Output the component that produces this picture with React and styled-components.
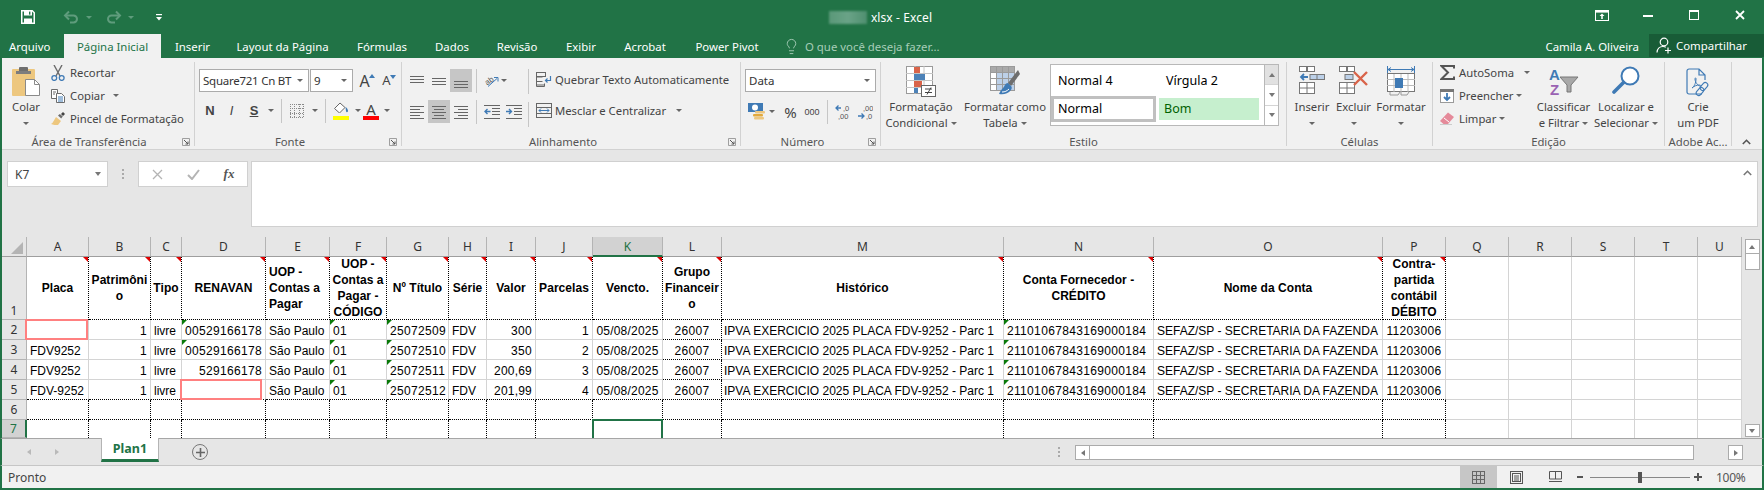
import React from 'react';
import styled, { createGlobalStyle } from 'styled-components';
import { Lightbulb } from 'lucide-react';

const UI = `"Noto Sans", "Open Sans", sans-serif`;
const GREEN = '#217346';

const Global = createGlobalStyle`
  html, body { margin: 0; padding: 0; background: #e6e6e6; }
  * { box-sizing: border-box; }
`;

const Page = styled.div`
  width: 1764px; height: 490px; overflow: hidden; display: flex; flex-direction: column;
  font-family: ${UI}; font-size: 11.3px; color: #444; background: #e6e6e6;
`;

/* ---------- title bar ---------- */
const TitleBar = styled.div`
  height: 34px; background: ${GREEN}; display: grid; grid-template-columns: 1fr auto 1fr; align-items: center; color: #fff;
`;
const Qat = styled.div`display: flex; align-items: center; padding-left: 21px;`;
const QatItem = styled.div`display: flex; align-items: center; margin-left: ${p => p.$ml || 0}px;`;
const Title = styled.div`display: flex; align-items: center; gap: 4px; margin-left: -3px; font-size: 12px; letter-spacing: .1px;`;
const Blurred = styled.span`
  width: 38px; height: 13px; background: linear-gradient(90deg, #5a9878, #6aa387 50%, #4f8f6f); filter: blur(.8px);
`;
const WinControls = styled.div`display: flex; align-items: center; justify-content: flex-end; height: 100%;`;
const WinBtn = styled.div`
  width: ${p => p.$w}px; display: flex; justify-content: center; align-items: center; margin-top: -4px;
`;
const Caret = styled.span`
  display: inline-block; flex: none; width: 0; height: 0; border-left: 3px solid transparent; border-right: 3px solid transparent;
  border-top: 3px solid ${p => p.$c || '#666'}; margin-left: ${p => p.$ml || 0}px;
`;

/* ---------- tabs ---------- */
const TabBar = styled.div`
  height: 24px; background: ${GREEN}; display: flex; color: #fff; font-size: 11.4px;
`;
const Tab = styled.div`
  width: ${p => p.$w}px; height: 24px; display: flex; align-items: center; justify-content: ${p => p.$left ? 'flex-start' : 'center'};
  padding-left: ${p => p.$left ? 9 : 0}px; white-space: nowrap;
  background: ${p => p.$active ? '#f1f1f1' : 'transparent'}; color: ${p => p.$active ? GREEN : '#fff'};
`;
const TellMe = styled.div`display: flex; align-items: center; margin-left: 10px; gap: 5px; color: #a7cdb8;`;
const UserName = styled.div`margin-left: auto; display: flex; align-items: center; padding-right: 10px;`;
const Share = styled.div`
  width: 115px; height: 23px; background: #185c37; display: flex; align-items: center; gap: 4px; padding-left: 7px;
`;

/* ---------- ribbon ---------- */
const Ribbon = styled.div`
  height: 92px; background: #f1f1f1; display: flex; border-left: 2px solid ${GREEN}; border-right: 2px solid ${GREEN};
  box-shadow: inset 0 -1px 0 #d2d2d2;
`;
const Group = styled.div`
  width: ${p => p.$w}px; height: 92px; padding-top: 4px; display: flex; flex-direction: column; flex: none;
`;
const GroupBody = styled.div`
  height: 72px; display: flex; padding-left: ${p => p.$pl || 0}px; gap: ${p => p.$gap || 0}px;
`;
const GroupFoot = styled.div`
  height: 16px; display: flex; align-items: center; justify-content: center; position: relative; color: #555; white-space: nowrap;
  padding-right: ${p => p.$pr || 0}px; padding-bottom: 2px;
`;
const Launch = styled.span`position: absolute; right: 4px; top: 4px; display: flex;`;
const GroupSep = styled.div`width: 1px; height: 84px; margin-top: 4px; background: #d2d2d2; flex: none;`;
const Collapse = styled.div`flex: 1; display: flex; justify-content: center; align-items: flex-end; padding-bottom: 5px; padding-right: 2px;`;

const SmallCol = styled.div`
  display: flex; flex-direction: column; width: ${p => p.$w}px; flex: none; margin-left: ${p => p.$ml || 0}px;
  padding-top: ${p => p.$pt || 0}px; gap: ${p => p.$gap || 0}px;
`;
const SmallBtn = styled.div`height: 23px; display: flex; align-items: center; white-space: nowrap; padding-bottom: 2px;`;
const SmallIcon = styled.span`width: ${p => p.$w || 14}px; display: flex; justify-content: center; flex: none; margin-right: ${p => p.$mr ?? 5}px;`;
const LargeBtn = styled.div`
  width: ${p => p.$w}px; flex: none; display: flex; flex-direction: column; align-items: center; white-space: nowrap; line-height: 16px;
`;
const LargeIcon = styled.div`height: 37px; display: flex; align-items: flex-start; justify-content: center; padding-top: ${p => p.$pt ?? 4}px;`;
const TextLine = styled.div`height: 16px; display: flex; align-items: center; justify-content: center;`;

const Stack = styled.div`display: flex; flex-direction: column; padding-top: 7px; gap: ${p => p.$gap ?? 7}px; flex: none; margin-left: ${p => p.$ml || 0}px;`;
const Row = styled.div`display: flex; align-items: center; height: 23px; flex: none; margin-top: ${p => p.$mt || 0}px;`;
const Combo = styled.div`
  width: ${p => p.$w}px; height: 23px; background: #fff; border: 1px solid #ababab; display: flex; align-items: center; white-space: nowrap;
  justify-content: space-between; padding: 0 5px 0 3px; margin-left: ${p => p.$ml || 0}px; color: #333; font-size: 11.5px; flex: none;
  letter-spacing: ${p => p.$ls || 0}px;
`;
const Tool = styled.div`
  width: ${p => p.$w || 22}px; height: ${p => p.$h || 23}px; flex: none; display: flex; align-items: center; justify-content: center;
  margin-left: ${p => p.$ml || 0}px; background: ${p => p.$on ? '#c6c6c6' : 'transparent'}; color: ${p => p.$c || '#444'};
  font-weight: ${p => p.$b ? 700 : 400}; font-style: ${p => p.$i ? 'italic' : 'normal'}; text-decoration: ${p => p.$u ? 'underline' : 'none'};
  font-size: ${p => p.$fs || 12}px; font-family: ${p => p.$serif ? '"Liberation Sans", sans-serif' : 'inherit'};
`;
const VSep = styled.div`width: 1px; height: ${p => p.$h || 24}px; background: #c6c6c6; flex: none; margin-left: ${p => p.$ml || 0}px;`;
const ResizeA = styled.span`font-size: ${p => p.$fs}px; color: #444; line-height: 1; position: relative; padding-right: 5px;`;
const ResizeTip = styled.span`
  position: absolute; right: 0; top: 1px; width: 0; height: 0; border-left: 3px solid transparent; border-right: 3px solid transparent;
  ${p => p.$up ? 'border-bottom: 4px solid #3f7ab5;' : 'border-top: 4px solid #3f7ab5;'}
`;
const FontColorA = styled.span`display: flex; flex-direction: column; align-items: center; width: 16px; font-size: 15px; line-height: 14px; color: #444;`;
const ColorBar = styled.span`width: 16px; height: 4px; background: ${p => p.$c}; margin-top: ${p => p.$mt || 0}px;`;

/* gallery */
const Gallery = styled.div`
  width: 229px; height: 62px; margin: 2px 0 0 1px; background: #fff; border: 1px solid #b8b8b8; display: flex; flex: none;
`;
const StyleGrid = styled.div`
  flex: 1; display: grid; grid-template-columns: 108px 105px; grid-template-rows: 31px 26px; align-items: center; color: #000; font-size: 12.5px;
`;
const StyleItem = styled.div`
  height: 26px; display: flex; align-items: center; padding: 0 0 1px ${p => p.$pl || 7}px;
  ${p => p.$sel ? 'border: 3px solid #c0c0c0; width: 105px; padding-left: 4px;' : ''}
  ${p => p.$bg ? `background: ${p.$bg}; color: #006100; height: 22px; width: 100px; padding-left: 5px;` : ''}
`;
const GalleryScroll = styled.div`width: 14px; border-left: 1px solid #b8b8b8; display: flex; flex-direction: column; flex: none;`;
const GalleryBtn = styled.div`
  flex: 1; display: flex; align-items: center; justify-content: center; background: ${p => p.$off ? '#e1e1e1' : '#fff'};
  border-bottom: ${p => p.$last ? 0 : 1}px solid #d4d4d4;
`;

/* ---------- formula bar ---------- */
const FormulaBar = styled.div`
  height: 87px; background: #e6e6e6; display: flex; align-items: flex-start; padding: 11px 0 0 5px; border-left: 2px solid ${GREEN}; border-right: 2px solid ${GREEN};
`;
const NameBox = styled.div`
  width: 101px; height: 26px; background: #fff; border: 1px solid #d0d0d0; display: flex; align-items: center; justify-content: space-between;
  padding: 0 6px 0 7px; font-size: 12px; color: #444; flex: none;
`;
const Grip = styled.div`
  width: 2px; height: 10px; margin: ${p => p.$m}; flex: none;
  background: repeating-linear-gradient(#aaa 0 2px, transparent 2px 4px);
`;
const FxBox = styled.div`
  width: 110px; height: 26px; background: #fff; border: 1px solid #d0d0d0; display: flex; align-items: center; flex: none;
`;
const FormulaInput = styled.div`
  width: 1507px; height: 66px; margin-left: 3px; background: #fff; border: 1px solid #d0d0d0; position: relative; flex: none;
`;
const ExpandChevron = styled.span`position: absolute; right: 5px; top: 8px; display: flex;`;
const FxText = styled.span`font-family: "Liberation Serif", serif; font-style: italic; font-size: 13px; color: #555; font-weight: 700;`;

/* ---------- sheet ---------- */
const SheetArea = styled.div`height: 201px; display: flex; border-left: 2px solid ${GREEN}; border-right: 2px solid ${GREEN}; background: #e6e6e6;`;
const SheetGrid = styled.div`
  display: grid; width: 1740px; height: 201px; overflow: hidden; background: #fff; flex: none;
  grid-template-columns: ${p => p.$cols}; grid-template-rows: 20px 63px repeat(5, 20px) 18px;
  font-family: "Liberation Sans", Arial, sans-serif; font-size: 12px; color: #000;
`;
const Corner = styled.div`
  background: #e6e6e6; border-right: 1px solid #b4b4b4; border-bottom: 1px solid #9e9e9e; display: flex; align-items: flex-end; justify-content: flex-end; padding: 0 3px 2px 0;
`;
const ColHead = styled.div`
  font-family: ${UI}; font-size: 12px; display: flex; align-items: center; justify-content: center;
  background: ${p => p.$sel ? '#d2d2d2' : '#e6e6e6'}; color: ${p => p.$sel ? GREEN : '#333'};
  border-right: 1px solid #b4b4b4; border-bottom: ${p => p.$sel ? `2px solid ${GREEN}` : '1px solid #9e9e9e'};
`;
const RowHead = styled.div`
  font-family: ${UI}; font-size: 12px; display: flex; align-items: ${p => p.$end ? 'flex-end' : 'center'}; justify-content: center;
  background: ${p => p.$sel ? '#d2d2d2' : '#e6e6e6'}; color: ${p => p.$sel ? GREEN : '#333'};
  border-right: ${p => p.$sel ? `2px solid ${GREEN}` : '1px solid #b4b4b4'}; border-bottom: 1px solid #b4b4b4;
`;
const Cell = styled.div`
  position: relative; display: flex; align-items: center; white-space: nowrap; padding: 3px 3px 0 ${p => p.$pl ?? 3}px;
  letter-spacing: ${p => p.$ls || 0}px;
  justify-content: ${p => p.$align === 'right' ? 'flex-end' : p.$align === 'center' ? 'center' : 'flex-start'};
  border-right: 1px ${p => p.$dr ? 'dotted #000' : 'solid #d4d4d4'};
  border-bottom: ${p => p.$nb ? '0' : `1px ${p.$db ? 'dotted #000' : 'solid #d4d4d4'}`};
`;
const HeadCell = styled(Cell)`
  padding: 0 1px 0 ${p => p.$pl ?? 1}px; font-weight: 700; line-height: 16px; text-align: ${p => p.$align || 'center'}; letter-spacing: .05px;
`;
const Corn = styled.span`
  position: absolute; top: 0; width: 0; height: 0;
  ${p => p.$red ? 'right: 0; border-top: 5px solid #e00000; border-left: 5px solid transparent;' : 'left: 0; border-top: 5px solid #0a7a0a; border-right: 5px solid transparent;'}
`;
const ErrBox = styled.span`
  position: absolute; top: -1px; bottom: -1px; left: -2px; right: ${p => p.$r || 0}px; border: 2px solid #ff8080; z-index: 2;
`;
const Selected = styled.span`
  position: absolute; top: -1px; left: -1px; right: -1px; bottom: -4px; border: 2px solid ${GREEN}; z-index: 3;
`;
const VScroll = styled.div`width: 20px; flex: none; display: flex; flex-direction: column; align-items: center; padding: 2px 0 1px;`;
const ScrollBtn = styled.div`width: 15px; height: ${p => p.$h}px; background: #fff; border: 1px solid #ababab; display: flex; align-items: center; justify-content: center;`;
const ScrollThumb = styled.div`width: 15px; height: 16px; background: #fff; border: 1px solid #ababab; border-top: 0;`;
const ScrollTrack = styled.div`flex: 1;`;
const Tri = styled.span`
  width: 0; height: 0; border-left: 3.5px solid transparent; border-right: 3.5px solid transparent;
  ${p => p.$up ? 'border-bottom: 4px solid #777;' : 'border-top: 4px solid #777;'}
`;
const TriH = styled.span`
  width: 0; height: 0; border-top: 3.5px solid transparent; border-bottom: 3.5px solid transparent;
  ${p => p.$l ? `border-right: 4px solid ${p.$c || '#777'};` : `border-left: 4px solid ${p.$c || '#777'};`}
`;

/* ---------- sheet tabs ---------- */
const SheetTabs = styled.div`
  height: 28px; background: #e6e6e6; border-top: 1px solid #a6a6a6; border-bottom: 1px solid #c6c6c6;
  border-left: 2px solid ${GREEN}; border-right: 2px solid ${GREEN}; display: flex; align-items: flex-start;
`;
const NavArrows = styled.div`display: flex; align-items: center; height: 26px; padding-left: 25px; gap: 24px; width: 99px; flex: none;`;
const SheetTab = styled.div`
  width: 58px; height: 24px; background: #fff; border: 1px solid #b4b4b4; border-top: 0; border-bottom: 3px solid ${GREEN}; margin-top: -1px;
  display: flex; align-items: center; justify-content: center; color: ${GREEN}; font-weight: 700; font-size: 12.5px; flex: none;
`;
const AddSheet = styled.div`
  width: 16px; height: 16px; margin: 5px 0 0 33px; border-radius: 50%; border: 1px solid #777; color: #666; display: flex; align-items: center; justify-content: center; flex: none;
`;
const HScroll = styled.div`
  width: 668px; height: 15px; margin-top: 6px; display: flex; flex: none; align-items: stretch;
`;
const HBtn = styled.div`width: 15px; flex: none; background: #fff; border: 1px solid #ababab; display: flex; align-items: center; justify-content: center;`;
const HThumb = styled.div`width: 604px; flex: none; background: #fff; border: 1px solid #ababab; border-left: 0;`;
const HTrack = styled.div`flex: 1;`;

/* ---------- status bar ---------- */
const StatusBar = styled.div`
  height: 24px; background: #f1f1f1; border: 2px solid ${GREEN}; border-top: 0; display: flex; align-items: center; padding-left: 6px; font-size: 12px;
`;
const StatusRight = styled.div`margin-left: auto; display: flex; align-items: center; height: 22px; padding-right: 19px;`;
const ViewBtn = styled.div`width: ${p => p.$w}px; height: 22px; display: flex; align-items: center; justify-content: center; background: ${p => p.$on ? '#c6c6c6' : 'transparent'};`;
const ZoomMark = styled.span`width: ${p => p.$w}px; height: 2px; background: #555; margin-left: ${p => p.$ml || 0}px; position: relative; flex: none;`;
const ZoomPlus = styled.span`position: absolute; left: 3px; top: -3px; width: 2px; height: 8px; background: #555;`;
const Slider = styled.div`width: 100px; height: 1px; background: #888; margin-left: 7px; position: relative; flex: none;`;
const SliderKnob = styled.span`position: absolute; left: 48px; top: -5px; width: 4px; height: 11px; background: #555;`;
const ZoomText = styled.span`margin-left: 14px; width: 27px; font-size: 12px; color: #555; letter-spacing: -.3px;`;

/* ---------- icons ---------- */
const SvgBase = styled.svg`display: block; flex: none;`;
const Svg = ({ w, h, children }) => <SvgBase width={w} height={h} viewBox={`0 0 ${w} ${h}`}>{children}</SvgBase>;

const SaveIcon = () => <Svg w={14} h={14}><path d="M.75.75h10.5l2 2v10.5H.75z" fill="none" stroke="#fff" strokeWidth="1.5"/><rect x="3" y="1" width="8" height="4.5" fill="#fff"/><rect x="8" y="1.6" width="1.4" height="3" fill="#217346"/><rect x="3" y="8.5" width="8" height="5" fill="#fff"/></Svg>;
const UndoIcon = ({ flip }) => <Svg w={17} h={14}><g transform={flip ? 'translate(17 0) scale(-1 1)' : undefined} fill="none" stroke="#5f9c7c" strokeWidth="2"><path d="M6 1.5 2 5.5l4 4"/><path d="M2 5.5h8.5a3.3 3.3 0 0 1 0 7H7"/></g></Svg>;
const QatMore = () => <Svg w={6} h={7}><rect x="0" y="0" width="6" height="1.2" fill="#fff"/><path d="M0 3h6L3 6.5z" fill="#fff"/></Svg>;
const RibbonMode = () => <Svg w={14} h={11}><rect x=".5" y=".5" width="13" height="10" fill="none" stroke="#fff"/><rect x="1" y="1" width="12" height="1.6" fill="#fff"/><path d="M7 3.5 4.5 6h1.7v3h1.6V6h1.7z" fill="#fff"/></Svg>;
const MinIcon = () => <Svg w={10} h={10}><rect x="0" y="5" width="10" height="2" fill="#fff"/></Svg>;
const MaxIcon = () => <Svg w={10} h={10}><rect x=".5" y=".5" width="9" height="9" fill="none" stroke="#fff"/><rect x="0" y="0" width="10" height="2" fill="#fff"/></Svg>;
const CloseIcon = () => <Svg w={10} h={10}><path d="M1 1l8 8M9 1 1 9" stroke="#fff" strokeWidth="1.8"/></Svg>;
const UserPlus = () => <Svg w={16} h={17}><circle cx="8" cy="5" r="3.8" fill="none" stroke="#fff" strokeWidth="1.2"/><path d="M1 15.5c.3-3.4 2.6-6 6-6 1 0 2 .2 2.8.7" fill="none" stroke="#fff" strokeWidth="1.2"/><path d="M12 10.5v6M9 13.5h6" stroke="#fff" strokeWidth="1.2"/></Svg>;

const PasteIcon = () => <Svg w={28} h={30}><rect x="0" y="3" width="23" height="27" rx="1" fill="#edc77f"/><rect x="7" y="1" width="9" height="6" rx="1" fill="#6e6e6e"/><rect x="4" y="5" width="15" height="3" fill="#7d7d7d"/><path d="M13.5 13.5h9l5 5v11h-14z" fill="#fff" stroke="#8a8a8a"/><path d="M22.5 13.5v5h5" fill="none" stroke="#8a8a8a"/></Svg>;
const CutIcon = () => <Svg w={14} h={16}><path d="M3 0l6 11M11 0 5 11" stroke="#6b6b6b" strokeWidth="1.4"/><circle cx="3.3" cy="13" r="2.4" fill="none" stroke="#3f7ab5" strokeWidth="1.3"/><circle cx="10.7" cy="13" r="2.4" fill="none" stroke="#3f7ab5" strokeWidth="1.3"/></Svg>;
const CopyIcon = () => <Svg w={14} h={14}><path d="M.5.5h6v9h-6z" fill="#fff" stroke="#6b6b6b"/><path d="M5.5 4.5h5l3 3v6h-8z" fill="#fff" stroke="#6b6b6b"/><path d="M7 8h5M7 10h5M7 12h5" stroke="#3f7ab5"/><path d="M2 3h3M2 5h2" stroke="#6b6b6b"/></Svg>;
const BrushIcon = () => <Svg w={15} h={14}><path d="M5 5l5 4-3 4c-2 0-5 0-7-1 2-1 3-4 5-7z" fill="#edc77f"/><path d="M7 3.5l1.8-1.5 3 2.5-1.6 2z" fill="#6e6e6e"/><path d="M10 2l2-2 2 2-2 2z" fill="#444"/></Svg>;
const Launcher = () => <Svg w={8} h={8}><path d="M.5 7.5V.5h7v7z" fill="none" stroke="#8a8a8a" strokeWidth=".8"/><path d="M2 2l4 4M6 3.5V6H3.5" fill="none" stroke="#555"/></Svg>;
const BorderIcon = () => <Svg w={14} h={14}><path d="M.5 0v14M4.5 0v14M9.5 0v14M13.5 0v14M0 .5h14M0 4.5h14M0 9.5h14M0 13.5h14" stroke="#888" strokeDasharray="1 1"/></Svg>;
const FillIcon = () => <Svg w={16} h={11}><path d="M7 1 1.5 6.5l5 4.5 5.5-5.5z" fill="#fff" stroke="#666"/><path d="M7 1 5 3" stroke="#666"/><path d="M12.5 5c1.5 1 2.5 2.5 2.5 4 0 1-1 1.5-1.5 1-.7-.5-.5-2-1-5z" fill="#3f7ab5"/></Svg>;

const LINES = {
  top: [[0, 14, 2], [0, 14, 5], [0, 14, 8]],
  mid: [[0, 14, 4], [0, 14, 7], [0, 14, 10]],
  bot: [[0, 14, 7], [0, 14, 10], [0, 14, 13]],
  left: [[0, 14, 1], [0, 10, 4], [0, 14, 7], [0, 10, 10], [0, 14, 13]],
  center: [[0, 14, 1], [2, 12, 4], [0, 14, 7], [2, 12, 10], [0, 14, 13]],
  right: [[0, 14, 1], [4, 14, 4], [0, 14, 7], [4, 14, 10], [0, 14, 13]],
};
const Lines = ({ kind }) => <Svg w={14} h={14}>{LINES[kind].map((l, i) => <path key={i} d={`M${l[0]} ${l[2] + .5}H${l[1]}`} stroke="#666"/>)}</Svg>;
const OrientIcon = () => <Svg w={15} h={13}><text x="1" y="9" fontSize="8" fontFamily="Liberation Sans" fill="#555" transform="rotate(-35 6 7)">ab</text><path d="M4 12.5l9-8" stroke="#3f7ab5"/><path d="M10 3.5h4v4" fill="none" stroke="#3f7ab5"/></Svg>;
const IndentIcon = ({ out }) => <Svg w={16} h={14}><path d="M0 .5h16M8 3.5h8M8 6.5h8M8 9.5h8M0 13.5h16" stroke="#666"/><path d={out ? 'M6.5 6.5H1M3.5 4 1 6.5 3.5 9' : 'M0 6.5h5.5M3 4l2.5 2.5L3 9'} fill="none" stroke="#3f7ab5" strokeWidth="1.4"/></Svg>;
const WrapIcon = () => <Svg w={16} h={15}><rect x=".5" y=".5" width="9" height="4" fill="none" stroke="#666"/><path d="M.5 .5v14h8v-3M.5 5h6M.5 9.5h6M.5 13h8" fill="none" stroke="#666"/><path d="M14.5 4v4.5H9.5M11.5 6.5l-2 2 2 2" fill="none" stroke="#3f7ab5" strokeWidth="1.2"/></Svg>;
const MergeIcon = () => <Svg w={16} h={15}><rect x=".5" y=".5" width="15" height="14" fill="none" stroke="#666"/><path d="M0 4.5h16M0 10.5h16" stroke="#666"/><path d="M3 7.5h10M3 7.5l2-2M3 7.5l2 2M13 7.5l-2-2M13 7.5l-2 2" stroke="#3f7ab5" fill="none"/></Svg>;
const CurrencyIcon = () => <Svg w={17} h={17}><rect x="0" y="0" width="15" height="9" fill="#3f7ab5"/><circle cx="7" cy="4.5" r="3" fill="#fff"/><rect x="7" y="8" width="10" height="2.4" rx="1" fill="#edc77f"/><rect x="5" y="11" width="10" height="2.4" rx="1" fill="#e2a93c"/><rect x="6" y="14" width="10" height="2.4" rx="1" fill="#edc77f"/></Svg>;
const DecIcon = ({ down }) => <Svg w={16} h={16}>
  <text x={down ? 6 : 8} y="7" fontSize="7.5" fontFamily="Liberation Sans" fill="#555">{down ? ',00' : ',0'}</text>
  <text x={down ? 9 : 3} y="15" fontSize="7.5" fontFamily="Liberation Sans" fill="#555">{down ? ',0' : ',00'}</text>
  <path d={down ? 'M1 12h6M4.5 9.5 7 12l-2.5 2.5' : 'M6 4H1M3.5 1.5 1 4l2.5 2.5'} fill="none" stroke="#3f7ab5" strokeWidth="1.3"/></Svg>;
const CondIcon = () => <Svg w={30} h={31}>
  <rect x=".5" y=".5" width="26" height="27" fill="#fff" stroke="#9a9a9a"/>
  <path d="M9 0v28M18 0v28M0 7.5h27M0 14.5h27M0 21.5h27" stroke="#c4c4c4"/>
  <rect x="8" y="1" width="6" height="6" fill="#d9644a"/><rect x="8" y="8" width="11" height="6" fill="#4d82b8"/><rect x="8" y="15" width="8" height="6" fill="#d9644a"/><rect x="8" y="22" width="4" height="5" fill="#4d82b8"/>
  <rect x="15.5" y="19.5" width="14" height="11" fill="#fff" stroke="#666"/><path d="M19 23h7M19 26.5h7M25 21.500l-4 7" stroke="#444" fill="none"/></Svg>;
const TableIcon = () => <Svg w={30} h={31}>
  <rect x=".5" y=".5" width="24" height="24" fill="#fff" stroke="#9a9a9a"/>
  <rect x="1" y="1" width="23" height="5" fill="#a9a9a9"/><rect x="6" y="6" width="18" height="18" fill="#bcd0e8"/>
  <path d="M6.5 0v25M12.5 0v25M18.5 0v25M0 6.5h25M0 12.5h25M0 18.5h25" stroke="#9a9a9a"/>
  <path d="M28 4 18 17l3 3L30 8z" fill="#6e6e6e"/><path d="M18 17c-3 0-3 3-5 5-1 1-3 3-4 6 4 1 9 0 12-4 1-2 1-3 0-4z" fill="#3f7ab5"/><path d="M12 26c3 0 5-1 7-3" stroke="#fff" fill="none"/></Svg>;
const GridCells = ({ y = 0, x = 0 }) => <g transform={`translate(${x} ${y})`}><rect x=".5" y=".5" width="15" height="11" fill="#fff" stroke="#777"/><path d="M8 0v12M0 6h16" stroke="#777"/></g>;
const InsertIcon = () => <Svg w={26} h={28}><g fill="#fff" stroke="#777"><rect x=".5" y=".5" width="7" height="5"/><rect x="8.5" y=".5" width="7" height="5"/></g><GridCells y={16}/><rect x="11" y="8.5" width="14.5" height="5" fill="#bcd0e8" stroke="#777"/><path d="M18 8.5v5" stroke="#777"/><path d="M9 11H2M5 8 2 11l3 3" fill="none" stroke="#3f7ab5" strokeWidth="1.8"/></Svg>;
const DeleteIcon = () => <Svg w={30} h={28}><g fill="#fff" stroke="#777"><rect x=".5" y=".5" width="7" height="5"/><rect x="8.5" y=".5" width="7" height="5"/></g><GridCells y={16}/><rect x="6" y="8.5" width="8" height="5" fill="#bcd0e8" stroke="#777"/><path d="M15 6l13 13M28 6 15 19" stroke="#d9644a" strokeWidth="2.4"/></Svg>;
const FormatIcon = () => <Svg w={28} h={30}><path d="M1 3.5h26M1 3.5l3-2M1 3.5l3 2M27 3.5l-3-2M27 3.5l-3 2M.5 0v7M27.5 0v7" fill="none" stroke="#3f7ab5"/><rect x=".5" y="7.5" width="27" height="18" fill="#fff" stroke="#777"/><path d="M7 8v18M14 8v18M21 8v18M0 13.5h28M0 19.5h28" stroke="#bbb"/><rect x="8" y="12" width="8" height="10" fill="#3f7ab5"/><path d="M3 26v3h8l2-3M14 26v3h6l2-3" fill="none" stroke="#999"/></Svg>;
const SigmaIcon = () => <Svg w={15} h={15}><path d="M14 3.5V1H1.5L8 7.5 1.5 14H14v-2.500" fill="none" stroke="#555" strokeWidth="2"/></Svg>;
const FillDown = () => <Svg w={14} h={14}><rect x=".5" y=".5" width="13" height="13" fill="#fff" stroke="#9a9a9a"/><rect x="0" y="0" width="14" height="3" fill="#777"/><path d="M7 4v7M4 8l3 3 3-3" fill="none" stroke="#3f7ab5" strokeWidth="1.8"/></Svg>;
const Eraser = () => <Svg w={14} h={13}><path d="M8 .5 14 5 8 12H3.5L0 9z" fill="#e58a9a"/><path d="M4 6l5 4" stroke="#fff"/><path d="M0 12.5h12" stroke="#ccc"/></Svg>;
const SortIcon = () => <Svg w={30} h={31}><text x="0" y="14" fontSize="15" fontWeight="700" fontFamily="Liberation Sans" fill="#3f7ab5">A</text><text x="1" y="29" fontSize="15" fontWeight="700" fontFamily="Liberation Sans" fill="#9a62b3">Z</text><path d="M11 11h18l-7 8v7h-4v-7z" fill="#a8a8a8" stroke="#777"/></Svg>;
const FindIcon = () => <Svg w={28} h={29}><circle cx="18" cy="10" r="8.5" fill="#fff" stroke="#3f7ab5" strokeWidth="2"/><path d="M11.5 16.5 2 26" stroke="#3f7ab5" strokeWidth="3.6" strokeLinecap="round"/></Svg>;
const PdfIcon = () => <Svg w={25} h={29}><path d="M16 26H3a2 2 0 0 1-2-2V3a2 2 0 0 1 2-2h10l6 6v5M13 1v6h6" fill="none" stroke="#3f7ab5" strokeWidth="1.2"/><path d="M6 20c2-1 4-5 4-9 0-2-1-1-1 0 0 3 3 7 5 7 1 0 1-1-1-1-2 0-5 1-7 3z" fill="none" stroke="#3f7ab5"/><rect x="15.5" y="14" width="5" height="9" rx="2.5" transform="rotate(40 18 18.5)" fill="none" stroke="#3f7ab5" strokeWidth="1.1"/><rect x="11.5" y="19" width="5" height="9" rx="2.5" transform="rotate(40 14 23.5)" fill="none" stroke="#3f7ab5" strokeWidth="1.1"/></Svg>;
const Chevron = ({ c = '#555' }) => <Svg w={9} h={6}><path d="M.8 5 4.5 1.3 8.2 5" fill="none" stroke={c} strokeWidth="1.6"/></Svg>;
const XIcon = () => <Svg w={11} h={11}><path d="M1 1l9 9M10 1l-9 9" stroke="#b4b4b4" strokeWidth="1.3"/></Svg>;
const CheckIcon = () => <Svg w={13} h={11}><path d="M1 6l4 4 7-9" fill="none" stroke="#b4b4b4" strokeWidth="2"/></Svg>;
const CornerTri = () => <Svg w={12} h={12}><path d="M12 0v12H0z" fill="#b4b4b4"/></Svg>;
const PlusIcon = () => <Svg w={9} h={9}><path d="M4.5 0v9M0 4.5h9" stroke="#666" strokeWidth="1.6"/></Svg>;
const NormalView = () => <Svg w={13} h={13}><path d="M.5 0v13M4.5 0v13M8.5 0v13M12.5 0v13M0 .5h13M0 4.5h13M0 8.5h13M0 12.5h13" stroke="#666"/></Svg>;
const LayoutView = () => <Svg w={13} h={13}><rect x=".5" y=".5" width="12" height="12" fill="none" stroke="#555"/><rect x="2.5" y="2.5" width="8" height="8" fill="none" stroke="#555"/><path d="M4 5h5M4 7h5M4 9h5" stroke="#555"/></Svg>;
const BreakView = () => <Svg w={13} h={13}><path d="M.5 8V.5h12V8M6.5 0v8M0 10.5h13" fill="none" stroke="#555"/><path d="M.5 8h12" stroke="#555"/></Svg>;

/* ---------- data ---------- */
const COLS = [62, 62, 31, 84, 64, 57, 62, 38, 49, 57, 70, 59, 282, 150, 229, 63, 63, 63, 63, 63, 44];
const LETTERS = 'ABCDEFGHIJKLMNOPQRSTU'.split('');
const ALIGN = ['left', 'right', 'left', 'left', 'left', 'left', 'left', 'left', 'right', 'right', 'center', 'center', 'left', 'left', 'left', 'center'];
const HEAD = [
  ['Placa'], ['Patrimôni', 'o'], ['Tipo'], ['RENAVAN'], ['UOP -', 'Contas a', 'Pagar'], ['UOP -', 'Contas a', 'Pagar -', 'CÓDIGO'],
  ['Nº Título'], ['Série'], ['Valor'], ['Parcelas'], ['Vencto.'], ['Grupo', 'Financeir', 'o'], ['Histórico'], ['Conta Fornecedor -', 'CRÉDITO'], ['Nome da Conta'],
  ['Contra-', 'partida', 'contábil', 'DÉBITO'],
];
const HIST = 'IPVA EXERCICIO 2025 PLACA FDV-9252 - Parc 1';
const ACC = '21101067843169000184';
const NOME = 'SEFAZ/SP - SECRETARIA DA FAZENDA';
const rowData = (a, d, tit, val, par) => [a, '1', 'livre', d, 'São Paulo', '01', tit, 'FDV', val, par, '05/08/2025', '26007', HIST, ACC, NOME, '11203006'];
const ROWS = [
  rowData('', '00529166178', '25072509', '300', '1'),
  rowData('FDV9252', '00529166178', '25072510', '350', '2'),
  rowData('FDV9252', '529166178', '25072511', '200,69', '3'),
  rowData('FDV-9252', '', '25072512', '201,99', '4'),
];
const GREEN_MARK = { 3: [2, 3], 5: [2, 3, 4, 5], 6: [2, 3, 4, 5], 13: [2, 3, 4, 5] };
const spacingFor = t => /^\d+$/.test(t) ? .33 : /^[\d/,]+$/.test(t) ? .2 : 0;

const Sheet = () => (
  <SheetGrid $cols={`25px ${COLS.map(c => c + 'px').join(' ')}`}>
    <Corner><CornerTri /></Corner>
    {LETTERS.map(l => <ColHead key={l} $sel={l === 'K'}>{l}</ColHead>)}

    <RowHead $end>1</RowHead>
    {LETTERS.map((l, i) => i < 16 ? (
      <HeadCell key={l} $dr $db $align={i === 4 ? 'left' : 'center'} $pl={i === 4 ? 3 : 1}>
        <Corn $red />
        <span>{HEAD[i].map((t, k) => <React.Fragment key={k}>{k > 0 && <br />}{t}</React.Fragment>)}</span>
      </HeadCell>
    ) : <Cell key={l} />)}

    {ROWS.map((r, ri) => {
      const n = ri + 2;
      return (
        <React.Fragment key={n}>
          <RowHead>{n}</RowHead>
          {LETTERS.map((l, i) => {
            const right = l === 'D' && n === 4;
            const isL = l === 'L';
            const text = r[i] || '';
            return (
              <Cell key={l} $align={right ? 'right' : ALIGN[i]} $db={i < 16 && (n === 5 || isL)} $dr={isL} $pl={l === 'M' ? 2 : undefined} $ls={spacingFor(text)}>
                {GREEN_MARK[i] && GREEN_MARK[i].includes(n) && <Corn />}
                {l === 'A' && n === 2 && <ErrBox />}
                {l === 'D' && n === 5 && <ErrBox $r={3} />}
                {text}
              </Cell>
            );
          })}
        </React.Fragment>
      );
    })}

    <RowHead>6</RowHead>
    {LETTERS.map((l, i) => <Cell key={l} $db={i < 16} $dr={i < 16} />)}
    <RowHead $sel>7</RowHead>
    {LETTERS.map((l, i) => <Cell key={l} $dr={i < 16} $nb>{l === 'K' && <Selected />}</Cell>)}
  </SheetGrid>
);

const GroupLabel = ({ children, launcher, pr }) => (
  <GroupFoot $pr={pr}>{children}{launcher && <Launch><Launcher /></Launch>}</GroupFoot>
);

export default function App() {
  return (
    <Page>
      <Global />
      <TitleBar>
        <Qat>
          <QatItem><SaveIcon /></QatItem>
          <QatItem $ml={28}><UndoIcon /></QatItem>
          <QatItem $ml={6}><Caret $c="#5f9c7c" /></QatItem>
          <QatItem $ml={13}><UndoIcon flip /></QatItem>
          <QatItem $ml={6}><Caret $c="#5f9c7c" /></QatItem>
          <QatItem $ml={22}><QatMore /></QatItem>
        </Qat>
        <Title><Blurred />xlsx - Excel</Title>
        <WinControls>
          <WinBtn $w={46}><RibbonMode /></WinBtn>
          <WinBtn $w={46}><MinIcon /></WinBtn>
          <WinBtn $w={46}><MaxIcon /></WinBtn>
          <WinBtn $w={46}><CloseIcon /></WinBtn>
          <WinBtn $w={1} />
        </WinControls>
      </TitleBar>

      <TabBar>
        <Tab $w={64} $left>Arquivo</Tab>
        <Tab $w={97} $active>Página Inicial</Tab>
        <Tab $w={63}>Inserir</Tab>
        <Tab $w={117}>Layout da Página</Tab>
        <Tab $w={82}>Fórmulas</Tab>
        <Tab $w={58}>Dados</Tab>
        <Tab $w={72}>Revisão</Tab>
        <Tab $w={56}>Exibir</Tab>
        <Tab $w={72}>Acrobat</Tab>
        <Tab $w={92}>Power Pivot</Tab>
        <TellMe><Lightbulb size={17} color="#a7cdb8" strokeWidth={1.3} />O que você deseja fazer...</TellMe>
        <UserName>Camila A. Oliveira</UserName>
        <Share><UserPlus />Compartilhar</Share>
      </TabBar>

      <Ribbon>
        <Group $w={192}>
          <GroupBody $pl={4}>
            <LargeBtn $w={40}>
              <LargeIcon><PasteIcon /></LargeIcon>
              <TextLine>Colar</TextLine>
              <TextLine><Caret /></TextLine>
            </LargeBtn>
            <SmallCol $w={140} $ml={5}>
              <SmallBtn><SmallIcon><CutIcon /></SmallIcon>Recortar</SmallBtn>
              <SmallBtn><SmallIcon><CopyIcon /></SmallIcon>Copiar<Caret $ml={8} /></SmallBtn>
              <SmallBtn><SmallIcon><BrushIcon /></SmallIcon>Pincel de Formatação</SmallBtn>
            </SmallCol>
          </GroupBody>
          <GroupLabel launcher pr={18}>Área de Transferência</GroupLabel>
        </Group>
        <GroupSep />

        <Group $w={206}>
          <GroupBody $pl={4}>
            <Stack>
              <Row>
                <Combo $w={110} $ls={-.25}>Square721 Cn BT<Caret /></Combo>
                <Combo $w={43} $ml={1}>9<Caret /></Combo>
                <Tool $w={14} $ml={7}><ResizeA $fs={16}>A<ResizeTip $up /></ResizeA></Tool>
                <Tool $w={14} $ml={8}><ResizeA $fs={13}>A<ResizeTip /></ResizeA></Tool>
              </Row>
              <Row>
                <Tool $w={22} $b $serif $fs={13}>N</Tool>
                <Tool $w={21} $i $serif $fs={13}>I</Tool>
                <Tool $w={24} $b $u $serif $fs={13}>S</Tool>
                <Tool $w={9}><Caret /></Tool>
                <VSep $ml={6} />
                <Tool $w={14} $ml={8}><BorderIcon /></Tool>
                <Tool $w={8} $ml={7}><Caret /></Tool>
                <VSep $ml={6} />
                <Tool $w={16} $ml={7}>
                  <FontColorA><FillIcon /><ColorBar $c="#ffff00" $mt={3} /></FontColorA>
                </Tool>
                <Tool $w={8} $ml={5}><Caret /></Tool>
                <Tool $w={16} $ml={1}><FontColorA>A<ColorBar $c="#ff0000" /></FontColorA></Tool>
                <Tool $w={8} $ml={4}><Caret /></Tool>
              </Row>
            </Stack>
          </GroupBody>
          <GroupLabel launcher pr={16}>Fonte</GroupLabel>
        </Group>
        <GroupSep />

        <Group $w={338}>
          <GroupBody $pl={4}>
            <Stack $gap={8}>
              <Row>
                <Tool><Lines kind="top" /></Tool>
                <Tool><Lines kind="mid" /></Tool>
                <Tool $on><Lines kind="bot" /></Tool>
                <VSep $ml={4} />
                <Tool $w={15} $ml={7}><OrientIcon /></Tool>
                <Tool $w={10}><Caret /></Tool>
              </Row>
              <Row>
                <Tool><Lines kind="left" /></Tool>
                <Tool $on><Lines kind="center" /></Tool>
                <Tool><Lines kind="right" /></Tool>
                <VSep $ml={4} />
                <Tool $w={16} $ml={7}><IndentIcon out /></Tool>
                <Tool $w={16} $ml={6}><IndentIcon /></Tool>
              </Row>
            </Stack>
            <Stack $gap={8} $ml={6}>
              <VSep $h={25} />
              <VSep $h={25} />
            </Stack>
            <SmallCol $w={200} $ml={7} $pt={7} $gap={8}>
              <SmallBtn><SmallIcon $w={16} $mr={3}><WrapIcon /></SmallIcon>Quebrar Texto Automaticamente</SmallBtn>
              <SmallBtn><SmallIcon $w={16} $mr={3}><MergeIcon /></SmallIcon>Mesclar e Centralizar<Caret $ml={10} /></SmallBtn>
            </SmallCol>
          </GroupBody>
          <GroupLabel launcher pr={16}>Alinhamento</GroupLabel>
        </Group>
        <GroupSep />

        <Group $w={139}>
          <GroupBody $pl={4}>
            <Stack $gap={7}>
              <Combo $w={131}>Data<Caret /></Combo>
              <Row $mt={1}>
                <Tool $w={17} $ml={3}><CurrencyIcon /></Tool>
                <Tool $w={8} $ml={3}><Caret /></Tool>
                <Tool $w={13} $ml={8} $fs={15}>%</Tool>
                <Tool $w={14} $ml={8} $fs={9} $serif>000</Tool>
                <VSep $ml={8} />
                <Tool $w={16} $ml={7}><DecIcon /></Tool>
                <Tool $w={16} $ml={6}><DecIcon down /></Tool>
              </Row>
            </Stack>
          </GroupBody>
          <GroupLabel launcher pr={16}>Número</GroupLabel>
        </Group>
        <GroupSep />

        <Group $w={405}>
          <GroupBody>
            <LargeBtn $w={80}>
              <LargeIcon><CondIcon /></LargeIcon>
              <TextLine>Formatação</TextLine>
              <TextLine>Condicional<Caret $ml={3} /></TextLine>
            </LargeBtn>
            <LargeBtn $w={88}>
              <LargeIcon><TableIcon /></LargeIcon>
              <TextLine>Formatar como</TextLine>
              <TextLine>Tabela<Caret $ml={3} /></TextLine>
            </LargeBtn>
            <Gallery>
              <StyleGrid>
                <StyleItem>Normal 4</StyleItem>
                <StyleItem $pl={7}>Vírgula 2</StyleItem>
                <StyleItem $sel>Normal</StyleItem>
                <StyleItem $bg="#c6efce">Bom</StyleItem>
              </StyleGrid>
              <GalleryScroll>
                <GalleryBtn $off><Tri $up /></GalleryBtn>
                <GalleryBtn><Tri /></GalleryBtn>
                <GalleryBtn $last><Tri /></GalleryBtn>
              </GalleryScroll>
            </Gallery>
          </GroupBody>
          <GroupLabel>Estilo</GroupLabel>
        </Group>
        <GroupSep />

        <Group $w={145}>
          <GroupBody $pl={5}>
            <LargeBtn $w={40}>
              <LargeIcon><InsertIcon /></LargeIcon>
              <TextLine>Inserir</TextLine>
              <TextLine><Caret /></TextLine>
            </LargeBtn>
            <LargeBtn $w={43}>
              <LargeIcon><DeleteIcon /></LargeIcon>
              <TextLine>Excluir</TextLine>
              <TextLine><Caret /></TextLine>
            </LargeBtn>
            <LargeBtn $w={52}>
              <LargeIcon><FormatIcon /></LargeIcon>
              <TextLine>Formatar</TextLine>
              <TextLine><Caret /></TextLine>
            </LargeBtn>
          </GroupBody>
          <GroupLabel>Células</GroupLabel>
        </Group>
        <GroupSep />

        <Group $w={231}>
          <GroupBody $pl={6}>
            <SmallCol $w={92}>
              <SmallBtn><SmallIcon $w={16} $mr={4}><SigmaIcon /></SmallIcon>AutoSoma<Caret $ml={10} /></SmallBtn>
              <SmallBtn><SmallIcon $w={16} $mr={4}><FillDown /></SmallIcon>Preencher<Caret $ml={3} /></SmallBtn>
              <SmallBtn><SmallIcon $w={16} $mr={4}><Eraser /></SmallIcon>Limpar<Caret $ml={3} /></SmallBtn>
            </SmallCol>
            <LargeBtn $w={65}>
              <LargeIcon><SortIcon /></LargeIcon>
              <TextLine>Classificar</TextLine>
              <TextLine>e Filtrar<Caret $ml={3} /></TextLine>
            </LargeBtn>
            <LargeBtn $w={60}>
              <LargeIcon><FindIcon /></LargeIcon>
              <TextLine>Localizar e</TextLine>
              <TextLine>Selecionar<Caret $ml={3} /></TextLine>
            </LargeBtn>
          </GroupBody>
          <GroupLabel>Edição</GroupLabel>
        </Group>
        <GroupSep />

        <Group $w={66}>
          <GroupBody>
            <LargeBtn $w={66}>
              <LargeIcon $pt={6}><PdfIcon /></LargeIcon>
              <TextLine>Crie</TextLine>
              <TextLine>um PDF</TextLine>
            </LargeBtn>
          </GroupBody>
          <GroupLabel>Adobe Ac...</GroupLabel>
        </Group>
        <GroupSep />
        <Collapse><Chevron /></Collapse>
      </Ribbon>

      <FormulaBar>
        <NameBox>K7<Tri /></NameBox>
        <Grip $m="8px 14px 0 14px" />
        <FxBox>
          <Tool $w={36} $h={24}><XIcon /></Tool>
          <Tool $w={36} $h={24}><CheckIcon /></Tool>
          <Tool $w={36} $h={24}><FxText>fx</FxText></Tool>
        </FxBox>
        <FormulaInput><ExpandChevron><Chevron c="#777" /></ExpandChevron></FormulaInput>
      </FormulaBar>

      <SheetArea>
        <Sheet />
        <VScroll>
          <ScrollBtn $h={15}><Tri $up /></ScrollBtn>
          <ScrollThumb />
          <ScrollTrack />
          <ScrollBtn $h={13}><Tri /></ScrollBtn>
        </VScroll>
      </SheetArea>

      <SheetTabs>
        <NavArrows><TriH $l $c="#b9b9b9" /><TriH $c="#b9b9b9" /></NavArrows>
        <SheetTab>Plan1</SheetTab>
        <AddSheet><PlusIcon /></AddSheet>
        <Grip $m="8px 15px 0 850px" />
        <HScroll>
          <HBtn><TriH $l /></HBtn>
          <HThumb />
          <HTrack />
          <HBtn><TriH /></HBtn>
        </HScroll>
      </SheetTabs>

      <StatusBar>
        Pronto
        <StatusRight>
          <ViewBtn $w={37} $on><NormalView /></ViewBtn>
          <ViewBtn $w={39}><LayoutView /></ViewBtn>
          <ViewBtn $w={38}><BreakView /></ViewBtn>
          <ZoomMark $w={6} $ml={3} />
          <Slider><SliderKnob /></Slider>
          <ZoomMark $w={8} $ml={4}><ZoomPlus /></ZoomMark>
          <ZoomText>100%</ZoomText>
        </StatusRight>
      </StatusBar>
    </Page>
  );
}
